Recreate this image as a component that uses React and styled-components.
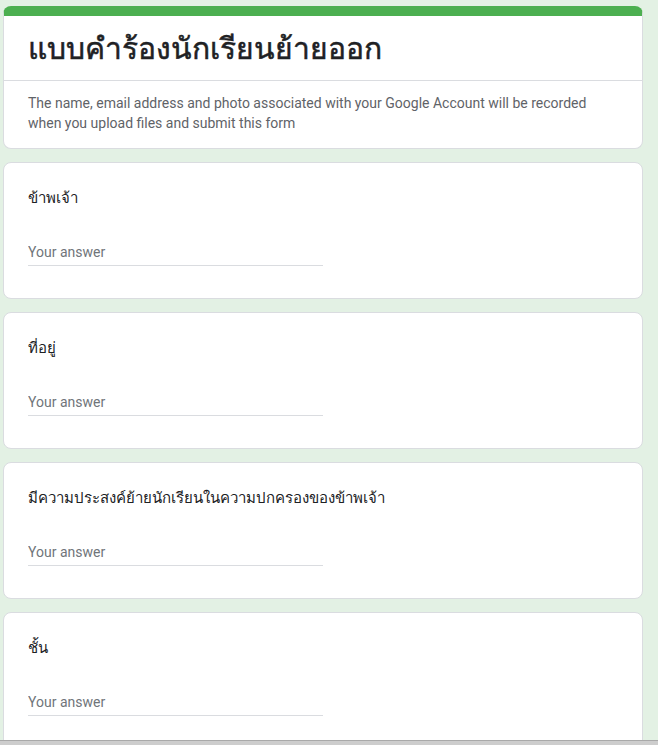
import styled, { createGlobalStyle } from 'styled-components'

const GlobalStyle = createGlobalStyle`
  html, body {
    margin: 0;
    padding: 0;
    background: #e3f1e4;
  }
  body {
    font-family: Roboto, "Noto Sans", "DejaVu Sans", sans-serif;
    color: #202124;
  }
`

const questions = [
  { id: 1, label: 'ข้าพเจ้า' },
  { id: 2, label: 'ที่อยู่' },
  { id: 3, label: 'มีความประสงค์ย้ายนักเรียนในความปกครองของข้าพเจ้า' },
  { id: 4, label: 'ชั้น' },
]

export default function App() {
  return (
    <Page>
      <GlobalStyle />
      <Form>
        <HeaderCard>
          <TitleRow>
            <Title>แบบคำร้องนักเรียนย้ายออก</Title>
          </TitleRow>
          <Notice>
            The name, email address and photo associated with your Google Account will be recorded
            when you upload files and submit this form
          </Notice>
        </HeaderCard>
        {questions.map((q) => (
          <QuestionCard key={q.id}>
            <Label>{q.label}</Label>
            <Answer placeholder="Your answer" />
          </QuestionCard>
        ))}
      </Form>
      <ScrollBar />
    </Page>
  )
}

const Page = styled.div`
  height: 745px;
  padding: 6px 15px 0 3px;
  box-sizing: border-box;
  overflow: hidden;
`

const Form = styled.div`
  display: flex;
  flex-direction: column;
  gap: 13px;
  width: 640px;
`

const Card = styled.div`
  background: #fff;
  border: 1px solid #dadce0;
  border-radius: 8px;
  box-sizing: border-box;
`

const HeaderCard = styled(Card)`
  border-top: 10px solid #4caf50;
  overflow: hidden;
`

const TitleRow = styled.div`
  padding: 14px 24px 12px;
  border-bottom: 1px solid #dadce0;
`

const Title = styled.h1`
  margin: 0;
  font-size: 30px;
  line-height: 38px;
  font-weight: 400;
  color: #202124;
  -webkit-text-stroke: 0.5px #202124;
`

const Notice = styled.p`
  margin: 0;
  padding: 12px 24px 15px;
  font-size: 14px;
  line-height: 20px;
  color: #5f6368;
`

const QuestionCard = styled(Card)`
  display: flex;
  flex-direction: column;
  align-items: flex-start;
  height: 137px;
  padding: 23px 24px 0;
`

const Label = styled.div`
  font-size: 15px;
  line-height: 24px;
  color: #202124;
`

const Answer = styled.input`
  margin-top: 28px;
  width: 295px;
  border: none;
  border-bottom: 1px solid #dadce0;
  padding: 4px 0 3px;
  font-family: Roboto, "Noto Sans", sans-serif;
  font-size: 14px;
  line-height: 20px;
  outline: none;
  background: transparent;
  &::placeholder {
    color: #70757a;
  }
`

const ScrollBar = styled.div`
  position: fixed;
  left: 0;
  right: 0;
  bottom: 0;
  height: 4px;
  background: #cdcdcd;
  border-top: 1px solid #a9a9a9;
`
